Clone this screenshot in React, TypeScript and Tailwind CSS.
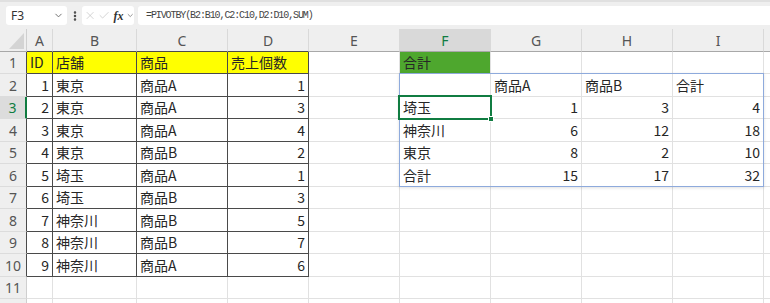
import React from 'react'
import { ChevronDown, X, Check, EllipsisVertical } from 'lucide-react'

type V = string | number | null

const letters = ['A', 'B', 'C', 'D', 'E', 'F', 'G', 'H', 'I']

// A..I for rows 1-12
const data: V[][] = [
  ['ID', '店舗', '商品', '売上個数', null, '合計', null, null, null],
  [1, '東京', '商品A', 1, null, null, '商品A', '商品B', '合計'],
  [2, '東京', '商品A', 3, null, '埼玉', 1, 3, 4],
  [3, '東京', '商品A', 4, null, '神奈川', 6, 12, 18],
  [4, '東京', '商品B', 2, null, '東京', 8, 2, 10],
  [5, '埼玉', '商品A', 1, null, '合計', 15, 17, 32],
  [6, '埼玉', '商品B', 3, null, null, null, null, null],
  [7, '神奈川', '商品B', 5, null, null, null, null, null],
  [8, '神奈川', '商品B', 7, null, null, null, null, null],
  [9, '神奈川', '商品A', 6, null, null, null, null, null],
  [null, null, null, null, null, null, null, null, null],
  [null, null, null, null, null, null, null, null, null],
]

const font = { fontFamily: "'Noto Sans CJK JP', 'Noto Sans', sans-serif" }

const Toolbar = () => (
  <div className="h-[29px] bg-[#efefef] border-t-2 border-[#e0e0e0] flex items-start pt-[4px] pl-[6px]">
    <div className="w-[61px] h-[19px] rounded-[3px] bg-white flex items-center justify-between pl-[5px] pr-[3px] text-[12px] text-[#333]" style={{ fontFamily: "'Noto Sans', sans-serif" }}>
      <span>F3</span>
      <ChevronDown size={11} color="#666" strokeWidth={2} />
    </div>
    <div className="w-[15px] h-[19px] flex items-center justify-center">
      <EllipsisVertical size={12} color="#444" strokeWidth={3} />
    </div>
    <div className="w-[52px] h-[19px] rounded-[3px] bg-white flex items-center pl-[2px] gap-[2px]">
      <X size={13} color="#bdbdbd" strokeWidth={1.3} />
      <Check size={13} color="#bdbdbd" strokeWidth={1.3} />
      <span className="italic font-bold text-[12px] text-[#333] leading-none ml-[1px]" style={{ fontFamily: "'Liberation Serif', serif" }}>
        fx
      </span>
      <ChevronDown size={9} color="#666" strokeWidth={2} />
    </div>
    <div className="flex-1 h-[19px] ml-[4px] rounded-l-[3px] bg-white flex items-center pl-[8px] text-[10px] text-[#444] tracking-[-1.1px]" style={{ fontFamily: "'Liberation Mono', monospace" }}>
      =PIVOTBY(B2:B10,C2:C10,D2:D10,SUM)
    </div>
  </div>
)

const Corner = () => (
  <div className="bg-[#efefef] border-r border-b border-r-[#cfcfcf] border-b-[#a8a8a8] relative">
    <svg width="27" height="23" className="absolute left-0 top-0">
      <polygon points="24,4 24,20 9,20" fill="#d4d4d4" />
    </svg>
  </div>
)

const ColHeader = ({ c, i }: { c: string; i: number }) => {
  const selected = c === 'F'
  const inTable = i < 4
  return (
    <div
      className={
        'flex items-center justify-center border-r border-b border-r-[#d9d9d9] text-[14px] ' +
        (inTable ? 'border-b-[#4a4a4a] ' : 'border-b-[#a8a8a8] ') +
        (selected ? 'bg-[#d9d9d9] text-[#107c41]' : 'bg-[#efefef] text-[#555]')
      }
      style={{ fontFamily: "'Noto Sans', sans-serif" }}
    >
      {c}
    </div>
  )
}

const RowHeader = ({ r }: { r: number }) => {
  const selected = r === 3
  const inTable = r <= 10
  let cls = 'flex items-center justify-center border-b border-b-[#dcdcdc] text-[14px] '
  if (selected) cls += 'border-r-2 border-r-[#107c41] bg-[#dcdcdc] text-[#107c41]'
  else if (inTable) cls += 'border-r border-r-[#4a4a4a] bg-[#efefef] text-[#555]'
  else cls += 'border-r border-r-[#cfcfcf] bg-[#efefef] text-[#555]'
  return (
    <div className={cls} style={{ fontFamily: "'Noto Sans', sans-serif" }}>
      {r <= 11 ? r : null}
    </div>
  )
}

const Cell = ({ v, r, i }: { v: V; r: number; i: number }) => {
  const inTable = r <= 10 && i < 4
  const num = typeof v === 'number'
  let cls = 'flex items-center overflow-visible whitespace-nowrap text-[14px] text-[#262626] border-r border-b '
  if (inTable) cls += 'border-r-[#4a4a4a] border-b-[#4a4a4a] '
  else cls += 'border-r-[#e1e1e1] border-b-[#e1e1e1] '
  if (r === 1 && i < 4) cls += 'bg-[#ffff00] '
  else if (r === 1 && i === 5) cls += 'bg-[#4ea72e] text-[#111] '
  else cls += 'bg-white '
  cls += num ? 'justify-end pr-[3px]' : 'justify-start pl-[3px]'
  return (
    <div className={cls} style={font}>
      {v}
    </div>
  )
}

export default function App() {
  return (
    <div className="w-[770px] h-[303px] overflow-hidden bg-white">
      <Toolbar />
      <div className="relative grid grid-cols-[27px_26px_84px_91px_81px_91px_91px_91px_91px_91px_1fr] grid-rows-[23px_22px_23px_22px_23px_22px_23px_22px_23px_22px_23px_22px_23px]">
        <Corner />
        {letters.map((c, i) => (
          <ColHeader key={c} c={c} i={i} />
        ))}
        <div className="bg-[#efefef] border-b border-b-[#a8a8a8]" />
        {data.map((row, ri) => (
          <React.Fragment key={ri}>
            <RowHeader r={ri + 1} />
            {row.map((v, i) => (
              <Cell key={i} v={v} r={ri + 1} i={i} />
            ))}
            <div className="bg-white border-b border-b-[#e1e1e1]" />
          </React.Fragment>
        ))}

        {/* spill range border */}
        <div className="absolute left-[399px] top-[44px] w-[365px] h-[114px] border border-[#8eaadc] shadow-[0_1px_3px_rgba(0,0,0,0.12)] pointer-events-none" />
        {/* active cell */}
        <div className="absolute left-[398px] top-[66px] w-[94px] h-[25px] border-2 border-[#107c41] pointer-events-none" />
        <div className="absolute left-[488px] top-[87px] w-[6px] h-[6px] bg-[#107c41] border border-white pointer-events-none" />
      </div>
    </div>
  )
}
